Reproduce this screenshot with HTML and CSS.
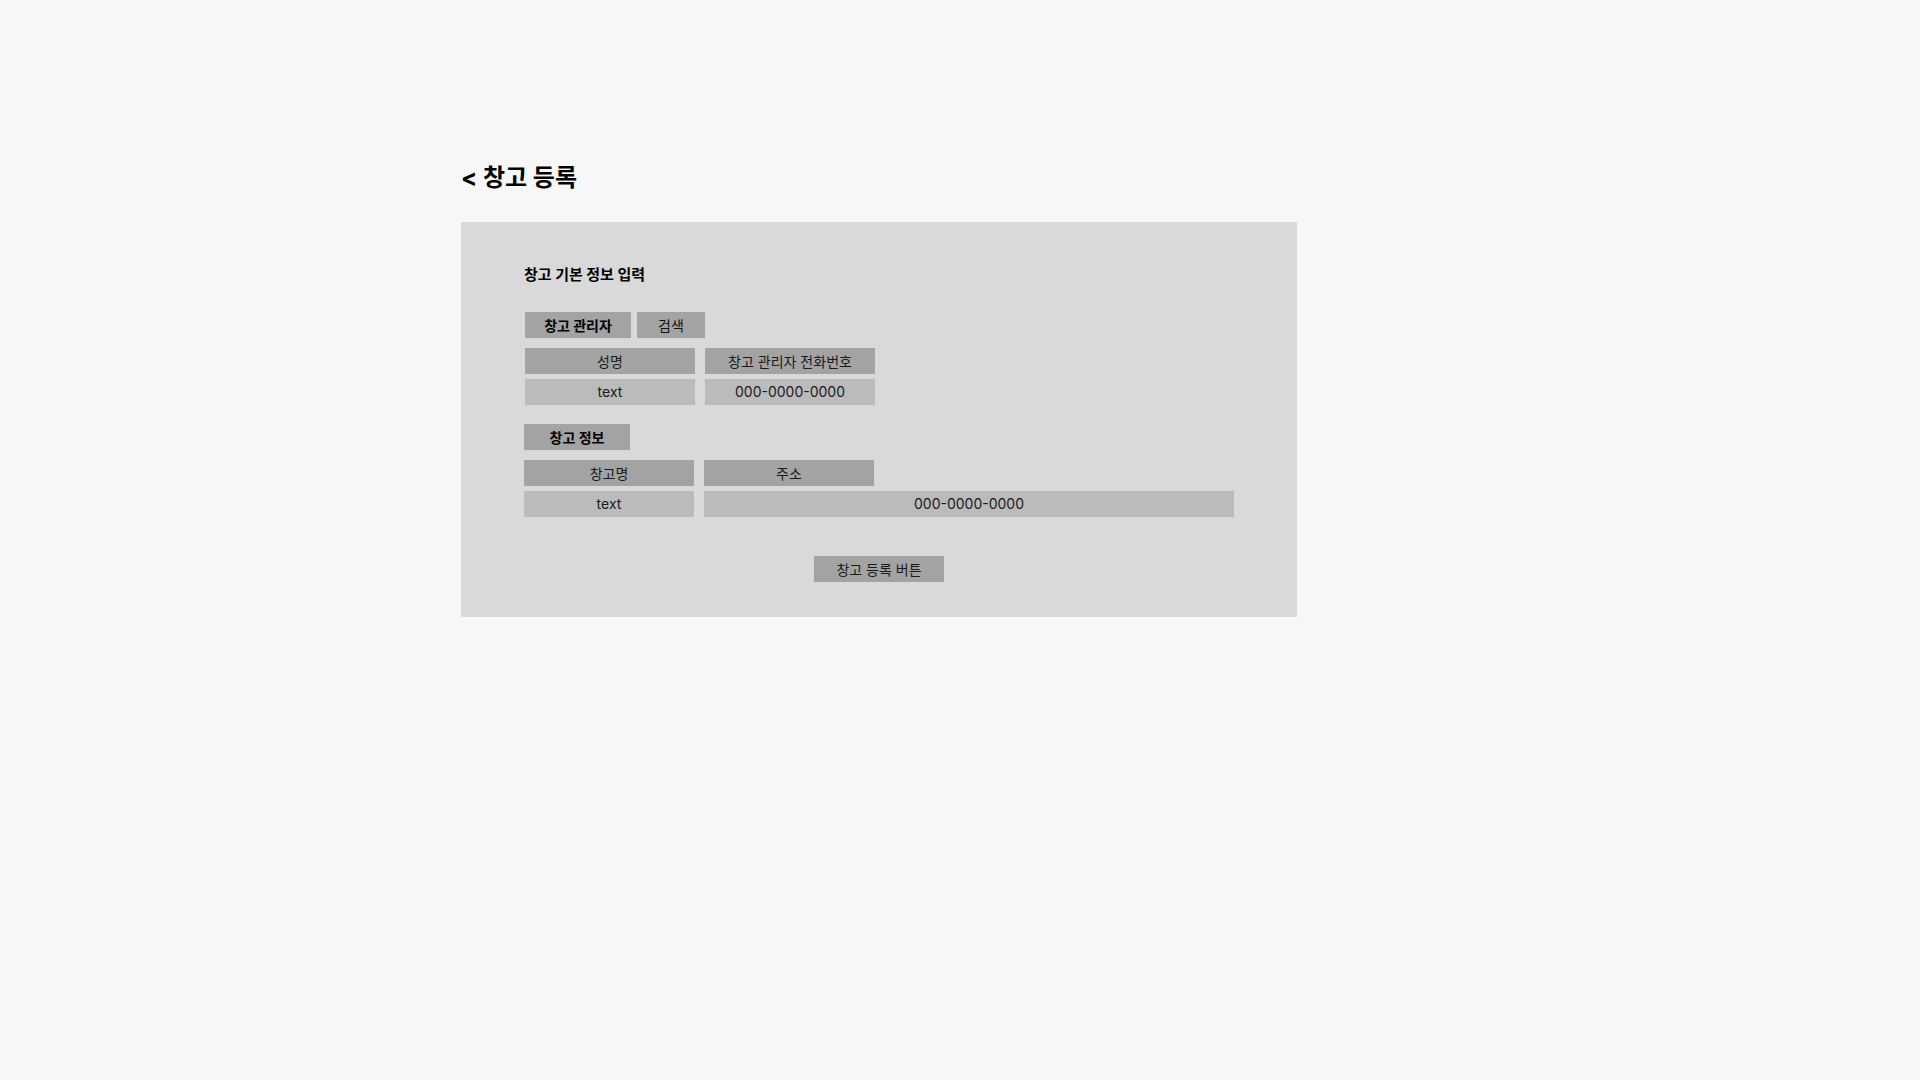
FILE: index.html
```html
<!DOCTYPE html>
<html lang="ko">
<head>
<meta charset="utf-8">
<title>창고 등록</title>
<link rel="stylesheet" href="styles.css">
</head>
<body>
<div class="page">
  <h1 class="page-title"><span class="back">&lt;</span> 창고 등록</h1>
  <section class="panel">
    <h2 class="section-title">창고 기본 정보 입력</h2>

    <div class="tag-row">
      <div class="tag tag-bold tag-manager">창고 관리자</div>
      <div class="tag tag-search">검색</div>
    </div>
    <div class="row row-head">
      <div class="cell head">성명</div>
      <div class="cell head">창고 관리자 전화번호</div>
    </div>
    <div class="row row-value">
      <div class="cell value">text</div>
      <div class="cell value">000-0000-0000</div>
    </div>

    <div class="tag-row tag-row-2">
      <div class="tag tag-bold tag-info">창고 정보</div>
    </div>
    <div class="row row-head second">
      <div class="cell head">창고명</div>
      <div class="cell head">주소</div>
    </div>
    <div class="row row-value second">
      <div class="cell value">text</div>
      <div class="cell value wide">000-0000-0000</div>
    </div>

    <div class="actions">
      <button class="submit">창고 등록 버튼</button>
    </div>
  </section>
</div>
</body>
</html>
```
FILE: styles.css
```css
* { box-sizing: border-box; }
html, body {
  margin: 0;
  padding: 0;
  background: #f7f7f7;
}
body {
  font-family: Inter, "Noto Sans CJK KR", sans-serif;
  color: #111;
  width: 1920px;
  height: 1080px;
}
.page {
  padding: 162px 0 0 461px;
}
.page-title {
  margin: 0;
  font-size: 24px;
  line-height: 32px;
  font-weight: 700;
  color: #000;
  height: 60px;
}
.panel {
  width: 836px;
  height: 395px;
  background: #d9d9d9;
  padding: 42px 0 0 63px;
}
.section-title {
  margin: 0;
  font-size: 15px;
  line-height: 21px;
  font-weight: 700;
  color: #000;
}
.tag-row {
  display: flex;
  gap: 6px;
  margin-top: 27px;
  margin-left: 1px;
}
.tag-row-2 {
  margin-top: 19px;
  margin-left: 0;
}
.tag {
  height: 26px;
  padding-bottom: 1px;
  background: #a3a3a3;
  display: flex;
  align-items: center;
  justify-content: center;
  font-size: 14px;
  color: #111;
}
.tag-bold { font-weight: 700; color: #000; }
.tag-manager { width: 106px; }
.tag-search { width: 68px; }
.tag-info { width: 106px; }
.row {
  display: flex;
  gap: 10px;
  margin-left: 1px;
}
.row.second { margin-left: 0; }
.row-head { margin-top: 10px; }
.row-value { margin-top: 5px; }
.cell {
  width: 170px;
  height: 26px;
  padding-bottom: 1px;
  display: flex;
  align-items: center;
  justify-content: center;
  font-size: 14px;
  color: #1a1a1a;
}
.head { background: #a3a3a3; }
.value { background: #bbbbbb; }
.wide { width: 530px; }
.actions {
  margin-top: 39px;
  padding-left: 290px;
}
.submit {
  width: 130px;
  height: 26px;
  border: 0;
  padding: 0 0 1px;
  background: #a3a3a3;
  font-family: Inter, "Noto Sans CJK KR", sans-serif;
  font-size: 14px;
  color: #1a1a1a;
}
```
